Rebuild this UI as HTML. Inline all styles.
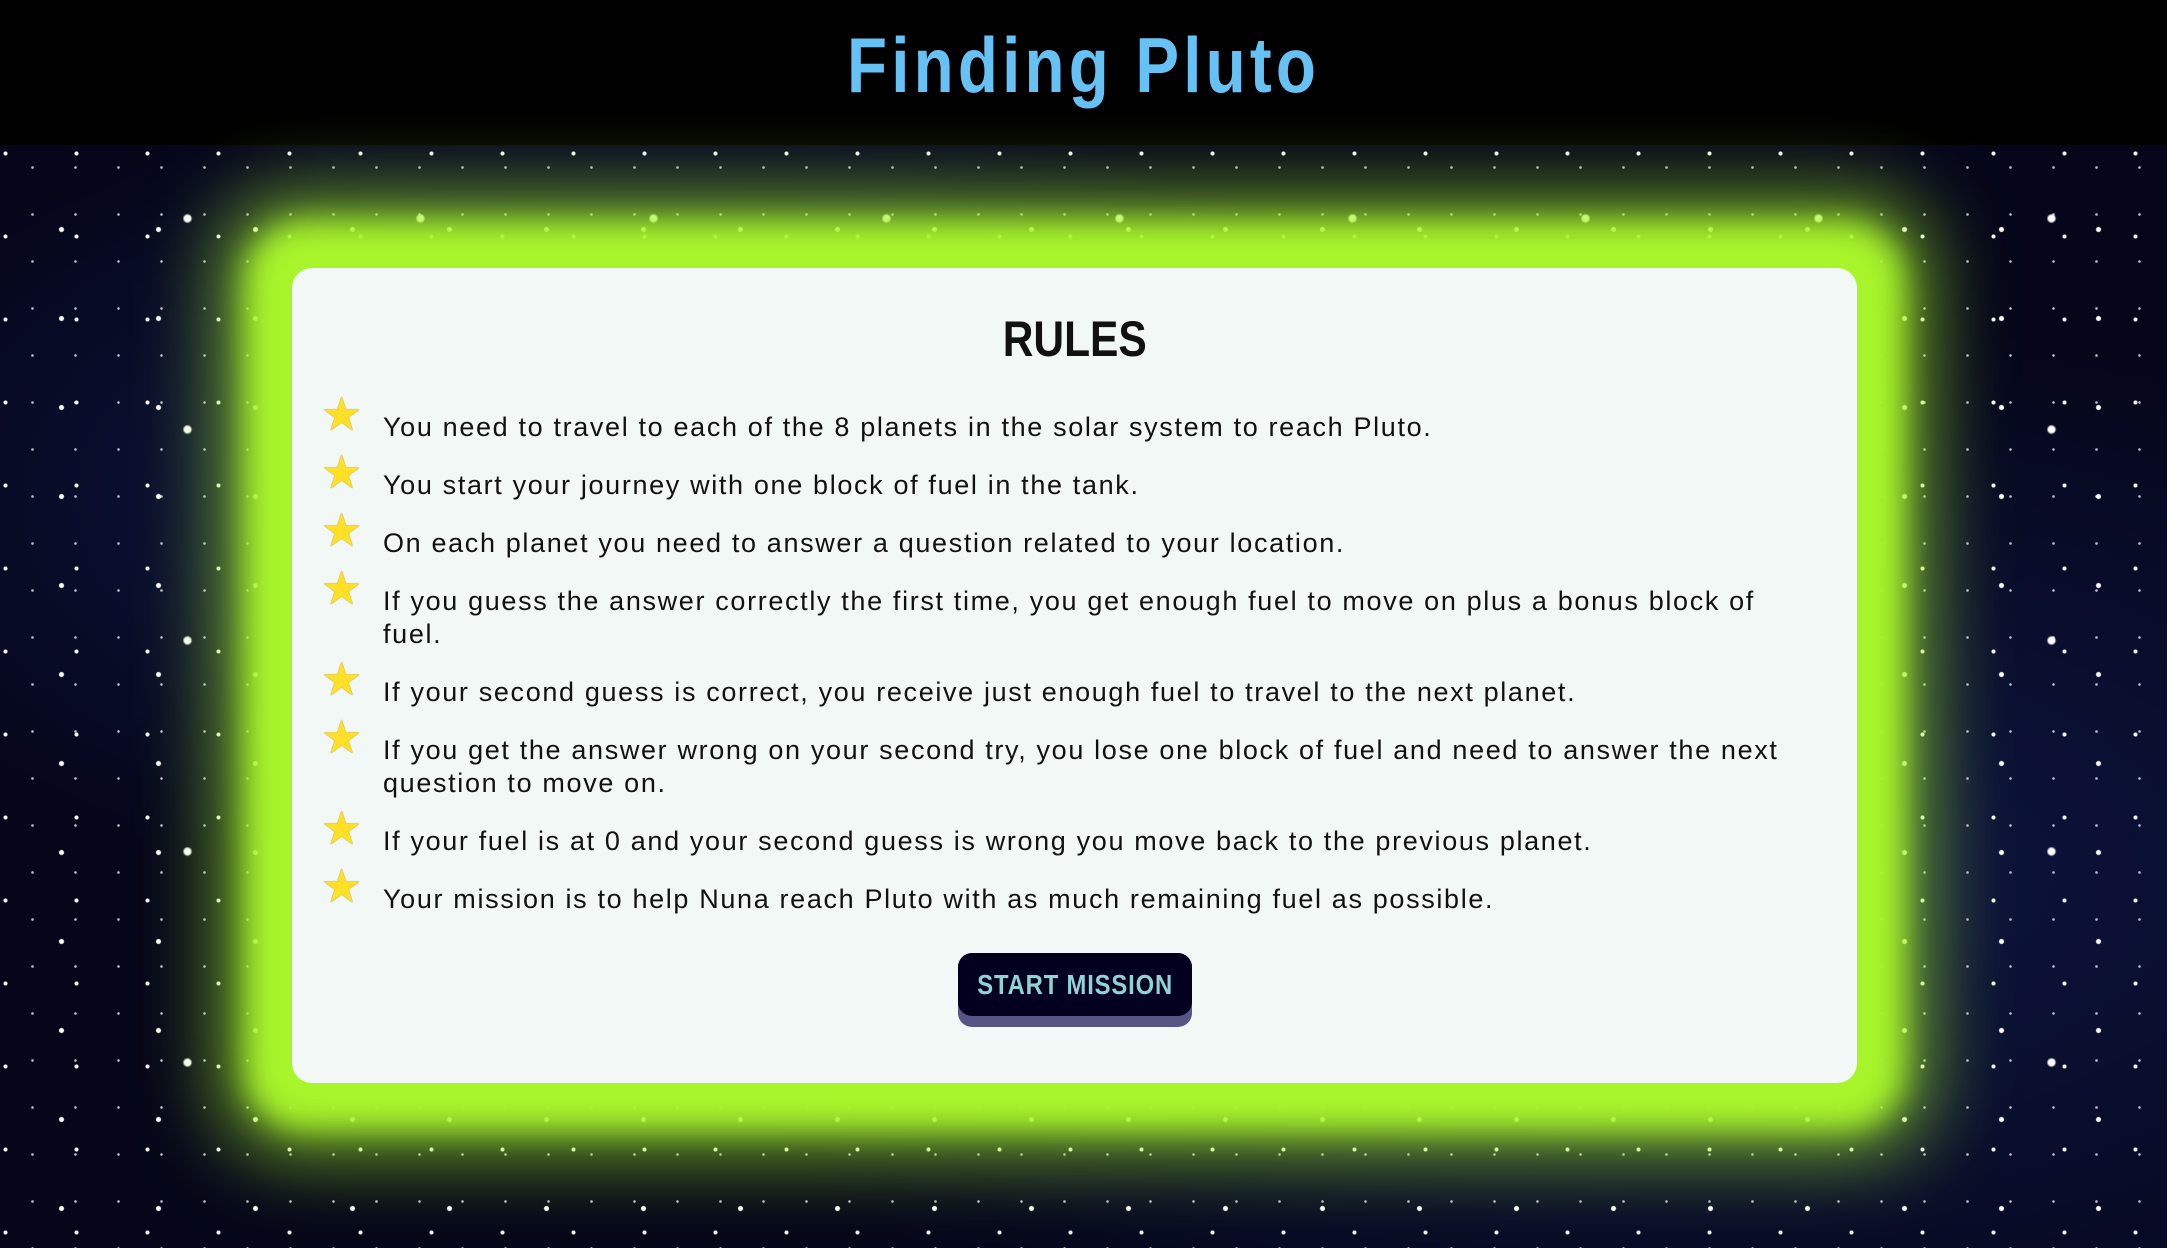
<!DOCTYPE html>
<html><head><meta charset="utf-8"><style>
html,body{margin:0;padding:0}
body{width:2167px;height:1248px;overflow:hidden;position:relative;font-family:"Liberation Sans",sans-serif;
background-color:#05061a;
background-image:
radial-gradient(circle,#fff 0 2px,transparent 3px),
radial-gradient(circle,#fff 0 1.5px,transparent 2.5px),
radial-gradient(circle,#fff 0 3px,transparent 5px),
radial-gradient(circle,#bbc 0 1px,transparent 1.6px),
radial-gradient(ellipse at 30% 40%,#101a4a 0,transparent 40%),
radial-gradient(ellipse at 80% 70%,#0e1642 0,transparent 45%);
background-size:97px 89px,71px 83px,233px 211px,43px 47px,100% 100%,100% 100%;
background-position:13px 7px,41px 29px,71px 113px,11px 3px,0 0,0 0;}
.hdr{position:absolute;left:0;top:0;width:2167px;height:145px;background:#000;text-align:center}
.hdr h1{margin:0;display:inline-block;font-family:"Liberation Sans",sans-serif;font-weight:bold;color:#66c1f5;font-size:78px;line-height:130px;transform:scaleX(0.84);letter-spacing:5px}
.glow{position:absolute;left:292px;top:268px;width:1565px;height:815px;border-radius:20px;background:#a8f52c;box-shadow:0 0 30px 45px #a8f52c,0 0 80px 70px rgba(168,245,44,.7)}
.card{position:absolute;left:292px;top:268px;width:1565px;height:815px;border-radius:20px;background:#f2f8f6}
.rules{position:absolute;left:0;top:42px;width:100%;text-align:center;font-family:"Liberation Sans",sans-serif;font-weight:bold;font-size:50px;color:#111}
.rules span{display:inline-block;transform:scaleX(0.85)}
ul{list-style:none;margin:0;padding:0;position:absolute;left:91px;top:143px;width:1440px}
li{position:relative;font-size:27px;line-height:33px;color:#111;margin-bottom:25px;letter-spacing:1.65px}
li .s{position:absolute;left:-62px;top:-13px;font-size:46px;letter-spacing:0;color:#ffe028;text-shadow:0 0 1px #b89000,0 0 1px #b89000}
.btn{position:absolute;left:666px;top:685px;width:234px;height:74px;border-radius:14px;background:#565586}
.btn div{height:63px;border-radius:14px;background:#02001e;color:#8fd3d8;font-family:"Liberation Sans",sans-serif;font-weight:bold;font-size:28px;line-height:63px;text-align:center;white-space:nowrap}
.btn span{display:inline-block;transform:scaleX(0.85);letter-spacing:1px}
</style></head><body>
<div class="hdr"><h1>Finding Pluto</h1></div>
<div class="glow"></div>
<div class="card">
<div class="rules"><span>RULES</span></div>
<ul>
<li><span class="s">★</span>You need to travel to each of the 8 planets in the solar system to reach Pluto.</li>
<li><span class="s">★</span>You start your journey with one block of fuel in the tank.</li>
<li><span class="s">★</span>On each planet you need to answer a question related to your location.</li>
<li><span class="s">★</span>If you guess the answer correctly the first time, you get enough fuel to move on plus a bonus block of fuel.</li>
<li><span class="s">★</span>If your second guess is correct, you receive just enough fuel to travel to the next planet.</li>
<li><span class="s">★</span>If you get the answer wrong on your second try, you lose one block of fuel and need to answer the next question to move on.</li>
<li><span class="s">★</span>If your fuel is at 0 and your second guess is wrong you move back to the previous planet.</li>
<li><span class="s">★</span>Your mission is to help Nuna reach Pluto with as much remaining fuel as possible.</li>
</ul>
<div class="btn"><div><span>START MISSION</span></div></div>
</div>
</body></html>
